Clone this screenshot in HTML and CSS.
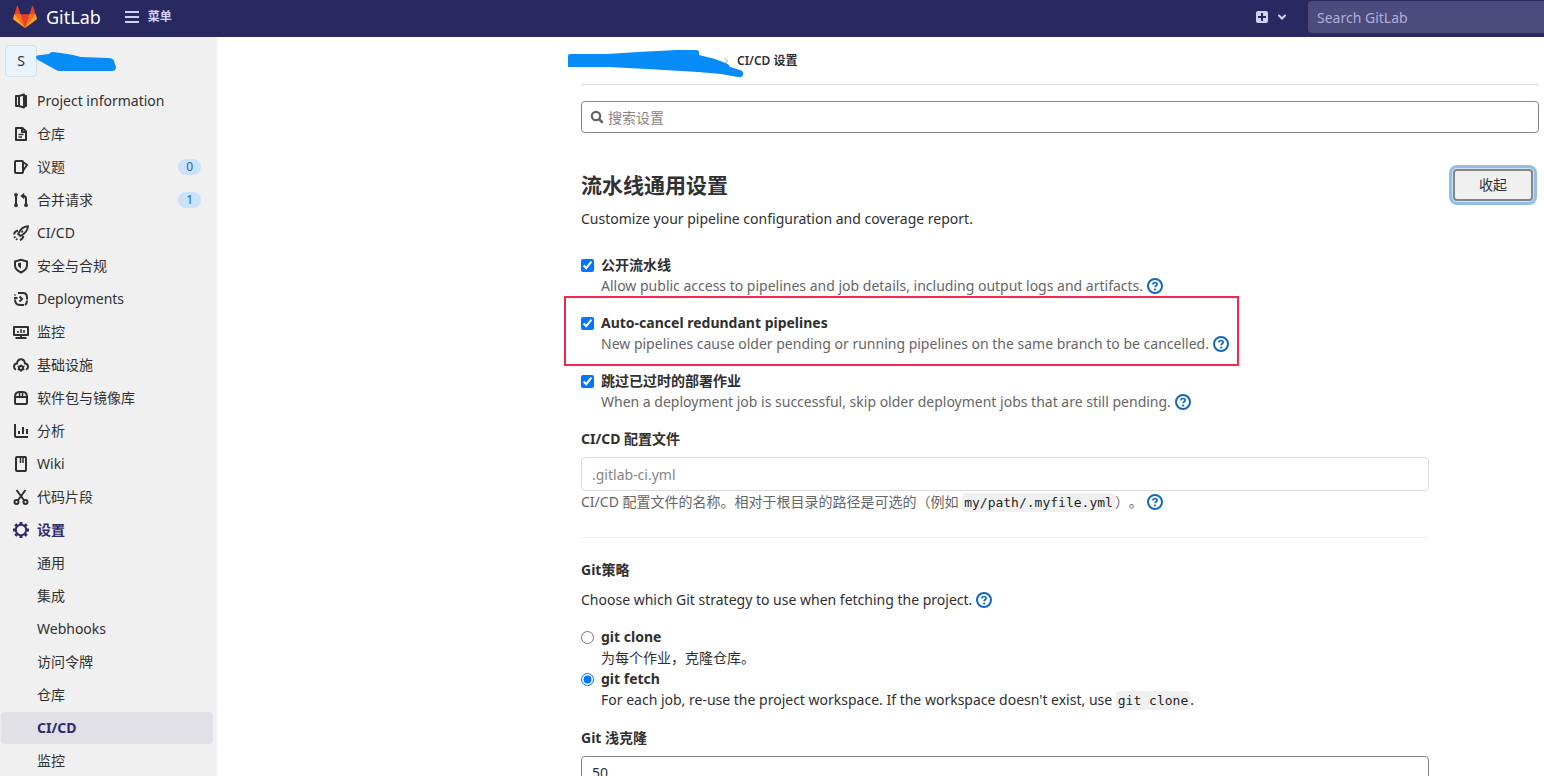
FILE: index.html
```html
<!DOCTYPE html>
<html lang="zh-CN">
<head>
<meta charset="utf-8">
<title>CI/CD 设置 · GitLab</title>
<link rel="stylesheet" href="styles.css">
</head>
<body>
<svg class="defs" aria-hidden="true">
  <symbol id="help" viewBox="0 0 16 16"><circle cx="8" cy="8" r="7" fill="none" stroke="currentColor" stroke-width="2"/><path d="M5.9 6.6C5.9 5.2 6.8 4.5 8 4.5s2.1.8 2.1 1.8c0 1.500-2 1.500-2 3" fill="none" stroke="currentColor" stroke-width="1.700"/><circle cx="8.100" cy="11.500" r="1.100" fill="currentColor"/></symbol>
</svg>
<header class="navbar">
  <a class="brand" href="#">
    <svg class="tanuki" viewBox="0 0 36 36" aria-hidden="true">
      <path fill="#e24329" d="M2 14l9.38 9v-9l-4-12.28c-.205-.632-1.176-.632-1.38 0z"/>
      <path fill="#e24329" d="M34 14l-9.38 9v-9l4-12.28c.205-.632 1.176-.632 1.38 0z"/>
      <path fill="#e24329" d="M18 34.38 3 14h30z"/>
      <path fill="#fc6d26" d="M18 34.38 11.38 14H2l4 11z"/>
      <path fill="#fc6d26" d="M18 34.38 24.62 14H34l-4 11z"/>
      <path fill="#fca326" d="M2 14 .1 20.16c-.18.565 0 1.2.5 1.56l17.42 12.66z"/>
      <path fill="#fca326" d="m34 14 1.9 6.16c.18.565 0 1.2-.5 1.56L18 34.38z"/>
    </svg>
    <span>GitLab</span>
  </a>
  <button class="menu" type="button">
    <svg class="icon" viewBox="0 0 16 16" aria-hidden="true"><path d="M1 3h14M1 8h14M1 13h14" fill="none" stroke="currentColor" stroke-width="2"/></svg>
    <span>菜单</span>
  </button>
  <button class="create" type="button" aria-label="新建">
    <svg class="icon" viewBox="0 0 16 16" aria-hidden="true"><rect x="2" y="2" width="12" height="12" rx="2" fill="currentColor"/><path d="M8 4v8M4 8h8" fill="none" stroke="#292961" stroke-width="2"/></svg>
    <svg class="caret" viewBox="0 0 12 12" aria-hidden="true"><path d="m3 4.500 3 3 3-3" fill="none" stroke="currentColor" stroke-width="2" stroke-linecap="round"/></svg>
  </button>
  <input class="global-search" type="search" placeholder="Search GitLab" aria-label="Search GitLab">
</header>
<div class="page">
  <nav class="sidebar">
    <div class="project">
      <span class="avatar">S</span>
      <svg class="redacted-name" viewBox="0 0 80 22" aria-hidden="true"><path fill="#088cf8" d="M-1 7Q-1 5 4 5L12 4Q13 2 16 2L24 3 36 5 44 7 71 8Q76 8 77 11L79 17Q79 21 75 21H21L10 15 1 10Q-1 9-1 7z"/></svg>
    </div>
    <ul class="nav">
      <li><a href="#"><svg class="icon" viewBox="0 0 16 16"><path d="M5.500 3H3v10h2.500M11 3h2v10h-2M6 3l5-1.500v13L6 13z" stroke-linejoin="round"/></svg>Project information</a></li>
      <li><a href="#"><svg class="icon" viewBox="0 0 16 16"><path d="M3 2h6.500L13 5.500V14H3zM9 2v4h4" stroke-linejoin="round"/><path d="M5.500 8.500h5M5.500 11h3.500" stroke-width="1.500"/></svg>仓库</a></li>
      <li><a href="#"><svg class="icon" viewBox="0 0 16 16"><path d="M3 2h6q1 0 1 1v10q0 1-1 1H3q-1 0-1-1V3q0-1 1-1z"/><path d="M10.500 3.500 14 5.700l-3.500 5.600" stroke-width="1.800"/></svg>议题<span class="badge">0</span></a></li>
      <li><a href="#"><svg class="icon" viewBox="0 0 16 16"><path d="M3 3v10M9 4h1.500q2.500 0 2.500 3v6"/><path d="M11.200.8v6.400L7.200 4z" fill="currentColor" stroke="none"/><circle class="dot" cx="3" cy="2.800" r="1.900"/><circle class="dot" cx="3" cy="13.200" r="1.900"/><circle class="dot" cx="13" cy="13.200" r="1.900"/></svg>合并请求<span class="badge">1</span></a></li>
      <li><a href="#"><svg class="icon" viewBox="0 0 16 16"><path d="M15 1.200C10.500 1.500 7 4.500 5.200 9L7.400 11C11.500 9 14.700 5.500 15 1.200zM5 5.700C3 5.700 1.700 7 .8 9.500M10.300 11c0 2-1 3-3.300 4.200" stroke-width="1.900"/><path d="m8.500 7.500 1.500-1.800M1 13l1.500-1.500M3 15l1.500-1.500" stroke-width="1.500"/></svg>CI/CD</a></li>
      <li><a href="#"><svg class="icon" viewBox="0 0 16 16"><path d="M8 1.800 14 3.500v4c0 3.200-2.500 5.400-6 7-3.500-1.600-6-3.800-6-7v-4z"/><path d="M8 4.500v6C6.200 9.500 5 8.300 5 6.700V5.300z" fill="currentColor" stroke="none"/></svg>安全与合规</a></li>
      <li><a href="#"><svg class="icon" viewBox="0 0 16 16"><path d="M5 2h5q4 0 4 4.500v2M11 14H7q-5 0-5-5.500M1 7h3.500M14 9.500q0 3-2 4.500M2 4.500V3.500M6.500 5.500 9 8l-2.500 2.500"/></svg>Deployments</a></li>
      <li><a href="#"><svg class="icon" viewBox="0 0 16 16"><path d="M1 3h14v8H1zM2.500 14h11M8 11v3" stroke-linejoin="round"/><path d="M5 9V7M8 9V5M11 9V6" stroke-width="1.500"/></svg>监控</a></li>
      <li><a href="#"><svg class="icon" viewBox="0 0 16 16"><path d="M3 12.500C1.500 12 1 10.800 1 9.700c0-1.800 1.200-3 3-3.100C4.300 4 6 2.200 8 2.200S11.700 4 12 6.600c1.800.1 3 1.300 3 3.100 0 1.100-.5 2.300-2 2.800"/><circle cx="8" cy="11" r="2" /><path d="M8 7.500v1.300M8 13.200v1.600M4.700 9.200l1.200.6M10.100 12.200l1.300.7M4.700 12.900l1.200-.7M10.100 9.800l1.300-.7" stroke-width="1.500"/></svg>基础设施</a></li>
      <li><a href="#"><svg class="icon" viewBox="0 0 16 16"><path d="M2 7h12v6q0 1-1 1H3q-1 0-1-1zM2 7c0-3 1.700-5 4-5h4c2.300 0 4 2 4 5"/><path d="M6.500 2v4.500M9.500 2v4.500" stroke-width="1.500"/></svg>软件包与镜像库</a></li>
      <li><a href="#"><svg class="icon" viewBox="0 0 16 16"><path d="M2 1v12q0 1 1 1h12M6 11V8M10 11V4M14 11V6"/></svg>分析</a></li>
      <li><a href="#"><svg class="icon" viewBox="0 0 16 16"><path d="M4 1h8q1 0 1 1v12q0 1-1 1H4q-1 0-1-1V2q0-1 1-1z"/><path d="M7.500 2v5M10 2v5" stroke-width="1.500"/></svg>Wiki</a></li>
      <li><a href="#"><svg class="icon" viewBox="0 0 16 16"><path d="m3.500 1 7.700 10.500M12.500 1 4.800 11.500"/><circle cx="3.500" cy="13" r="2"/><circle cx="12.500" cy="13" r="2"/></svg>代码片段</a></li>
      <li><a class="current" href="#"><svg class="icon" viewBox="0 0 16 16"><circle cx="8" cy="8" r="5.200"/><path d="M8 0v2.500M8 13.500V16M0 8h2.500M13.500 8H16M2.300 2.300l1.700 1.700M12 12l1.700 1.700M2.300 13.700 4 12M12 4l1.700-1.700" stroke-width="3"/></svg>设置</a>
        <ul class="subnav">
          <li><a href="#">通用</a></li>
          <li><a href="#">集成</a></li>
          <li><a href="#">Webhooks</a></li>
          <li><a href="#">访问令牌</a></li>
          <li><a href="#">仓库</a></li>
          <li><a class="current active" href="#">CI/CD</a></li>
          <li><a href="#">监控</a></li>
        </ul>
      </li>
    </ul>
  </nav>
  <main class="content">
    <div class="breadcrumb">
      <span class="redacted-path"><svg class="scribble" viewBox="0 0 178 30" aria-hidden="true"><path fill="#088cf8" d="M1 7Q1 5 3 5L40 5 71 3 110 1H130Q133 2 132 6L148 10 161 15 163 18 173 21Q177 22 176 26 175 29 171 28L154 25 131 23 80 20 41 18H1z"/></svg></span>
      <svg class="sep" viewBox="0 0 8 8" aria-hidden="true"><path d="m2.500 1 3 3-3 3" fill="none" stroke="#999" stroke-width="1"/></svg>
      <strong>CI/CD 设置</strong>
    </div>
    <div class="settings-search">
      <svg class="magnifier" viewBox="0 0 14 14" aria-hidden="true"><circle cx="6" cy="6" r="4.200" fill="none" stroke="#666" stroke-width="2.200"/><path d="m9.300 9.300 2.700 2.700" stroke="#666" stroke-width="2.500" stroke-linecap="round"/></svg>
      <input type="search" placeholder="搜索设置" aria-label="搜索设置">
    </div>
    <section class="settings">
      <div class="settings-head">
        <div>
          <h1>流水线通用设置</h1>
          <p>Customize your pipeline configuration and coverage report.</p>
        </div>
        <button class="collapse" type="button">收起</button>
      </div>
      <form class="form">
        <div class="option">
          <input type="checkbox" id="public" checked>
          <label for="public">公开流水线</label>
          <p class="muted">Allow public access to pipelines and job details, including output logs and artifacts. <a class="help" href="#" aria-label="帮助"><svg><use href="#help"/></svg></a></p>
        </div>
        <div class="option highlighted">
          <input type="checkbox" id="autocancel" checked>
          <label for="autocancel">Auto-cancel redundant pipelines</label>
          <p class="muted">New pipelines cause older pending or running pipelines on the same branch to be cancelled. <a class="help" href="#" aria-label="帮助"><svg><use href="#help"/></svg></a></p>
        </div>
        <div class="option">
          <input type="checkbox" id="skip" checked>
          <label for="skip">跳过已过时的部署作业</label>
          <p class="muted">When a deployment job is successful, skip older deployment jobs that are still pending. <a class="help" href="#" aria-label="帮助"><svg><use href="#help"/></svg></a></p>
        </div>
        <div class="field">
          <label for="config">CI/CD 配置文件</label>
          <input class="text optional" type="text" id="config" placeholder=".gitlab-ci.yml">
          <p class="muted">CI/CD 配置文件的名称。相对于根目录的路径是可选的（例如 <code>my/path/.myfile.yml</code>）。 <a class="help" href="#" aria-label="帮助"><svg><use href="#help"/></svg></a></p>
        </div>
        <hr>
        <fieldset>
          <legend>Git策略</legend>
          <p class="lead">Choose which Git strategy to use when fetching the project. <a class="help" href="#" aria-label="帮助"><svg><use href="#help"/></svg></a></p>
          <div class="choice">
            <input type="radio" name="strategy" id="clone">
            <label for="clone">git clone</label>
            <p>为每个作业，克隆仓库。</p>
          </div>
          <div class="choice">
            <input type="radio" name="strategy" id="fetch" checked>
            <label for="fetch">git fetch</label>
            <p>For each job, re-use the project workspace. If the workspace doesn't exist, use <code>git clone</code>.</p>
          </div>
        </fieldset>
        <div class="field">
          <label for="depth">Git 浅克隆</label>
          <input class="text" type="text" id="depth" value="50">
        </div>
      </form>
    </section>
  </main>
</div>
</body>
</html>
```

FILE: styles.css
```css
*, *::after { box-sizing: border-box; }
html { overflow: hidden; }
body {
  margin: 0;
  height: 100vh;
  display: flex;
  flex-direction: column;
  overflow: hidden;
  background: #fff;
  color: #303030;
  font: 14px/21px "Noto Sans", "Noto Sans CJK SC", sans-serif;
  text-spacing-trim: space-all;
}
h1, p, ul, fieldset, legend { margin: 0; padding: 0; }
ul { list-style: none; }
fieldset { border: 0; min-width: 0; }
a { color: inherit; text-decoration: none; }
input, button { font: inherit; color: inherit; }
svg { display: block; }
.defs { position: absolute; width: 0; height: 0; }
.icon { width: 16px; height: 16px; flex: none; }

/* Top bar */
.navbar {
  flex: none;
  display: flex;
  align-items: center;
  height: 37px;
  padding: 0 0 3px 13px;
  background: #292961;
  color: #d1d1f0;
}
.brand { display: flex; align-items: center; gap: 9px; color: #fff; font-size: 18px; }
.tanuki { width: 24px; height: 24px; }
.menu, .create {
  display: flex;
  align-items: center;
  padding: 0;
  border: 0;
  background: none;
}
.menu { gap: 8px; margin-left: 23px; padding-bottom: 1px; font-size: 12px; font-weight: 600; }
.create { gap: 6px; margin: 0 20px 0 auto; }
.caret { width: 12px; height: 12px; }
.global-search {
  width: 236px;
  height: 32px;
  padding: 0 9px;
  border: 0;
  border-radius: 4px 0 0 4px;
  background: #4c4b7d;
}
.global-search::placeholder { color: #aeaed6; }

/* Sidebar */
.page { flex: 1; display: flex; min-height: 0; }
.sidebar {
  flex: none;
  width: 217px;
  padding: 8px 4px 0 1px;
  overflow: hidden;
  background: #f0f0f0;
}
.project { display: flex; align-items: center; margin: 0 0 8px 4px; }
.avatar {
  width: 32px;
  height: 32px;
  border: 1px solid #d4e0ea;
  border-radius: 4px;
  background: #e9f3fc;
  line-height: 30px;
  text-align: center;
}
.redacted-name { width: 80px; height: 22px; overflow: visible; }
.nav a {
  display: flex;
  align-items: center;
  gap: 8px;
  height: 32px;
  margin-bottom: 1px;
  padding: 0 12px 2px;
  border-radius: 4px;
}
.nav .icon { margin-top: 2px; fill: none; stroke: currentColor; stroke-width: 2; }
.nav .dot { fill: currentColor; stroke: none; }
.nav .subnav a { padding-left: 36px; }
.nav .current { color: #2f2a6b; font-weight: 700; }
.nav .active { background: #e1e0e6; }
.badge {
  margin: 2px 0 0 auto;
  padding: 0 8px;
  border-radius: 8px;
  background: #cbe2f9;
  color: #1068bf;
  font-size: 12px;
  line-height: 16px;
}

/* Content column */
.content { flex: 1; max-width: 963px; margin-left: auto; padding-right: 5px; }
.breadcrumb {
  display: flex;
  align-items: center;
  gap: 7px;
  height: 48px;
  border-bottom: 1px solid #dbdbdb;
  font-size: 12px;
}
.breadcrumb strong { font-weight: 600; }
.redacted-path { position: relative; width: 134px; height: 24px; }
.scribble { position: absolute; left: -14px; top: 0; width: 178px; height: 30px; }
.sep { width: 8px; height: 8px; }
.settings-search {
  display: flex;
  align-items: center;
  gap: 4px;
  height: 32px;
  margin: 16px 0 36px;
  padding: 0 8px;
  border: 1px solid #868686;
  border-radius: 4px;
}
.magnifier { width: 14px; height: 14px; }
.settings-search input { flex: 1; padding: 0; border: 0; outline: 0; background: none; }
::placeholder { color: #868686; opacity: 1; }

.settings-head {
  display: flex;
  justify-content: space-between;
  align-items: flex-start;
  padding-right: 6px;
}
h1 { font-size: 21px; font-weight: 600; line-height: 32px; }
.settings-head p { margin-top: 7px; }
.collapse {
  width: 80px;
  height: 32px;
  padding: 0 0 2px;
  border: 2px solid #868686;
  border-radius: 4px;
  background: #f0f0f0;
  box-shadow: 0 0 0 1px #cfe0f2, 0 0 0 4px #94bee8;
}

/* Form */
.form { max-width: 848px; margin-top: 25px; }
.muted { color: #666; }
.option, .choice {
  position: relative;
  display: grid;
  grid-template-columns: 13px 1fr;
  column-gap: 7px;
  align-items: center;
}
.option { margin-bottom: 16px; }
.option input, .choice input { width: 13px; height: 13px; margin: 2px 0 0; }
.option p, .choice p { grid-column: 2; }
label, legend { font-weight: 700; }
.highlighted::after {
  content: "";
  position: absolute;
  left: -17px;
  top: -16px;
  width: 675px;
  height: 70px;
  border: 2px solid #f9254f;
  pointer-events: none;
}
.help { display: inline-block; vertical-align: -3px; color: #1068bf; }
.help svg { width: 16px; height: 16px; }
.option p, .field p, .lead { height: 21px; white-space: nowrap; }
.field label { display: block; margin-bottom: 8px; }
.text {
  display: block;
  width: 100%;
  height: 32px;
  padding: 0 10px;
  border: 1px solid #868686;
  border-radius: 4px;
}
.optional { height: 34px; border-color: #dbdbdb; }
code {
  padding: 2px;
  border-radius: 4px;
  background: #f0f0f0;
  color: #1f1f1f;
  font: 13px/15px "DejaVu Sans Mono", monospace;
}
hr { margin: 25px 0 21px; border: 0; border-top: 1px solid #eee; }
.lead { margin: 9px 0 16px; }
fieldset { margin-bottom: 17px; }
```
